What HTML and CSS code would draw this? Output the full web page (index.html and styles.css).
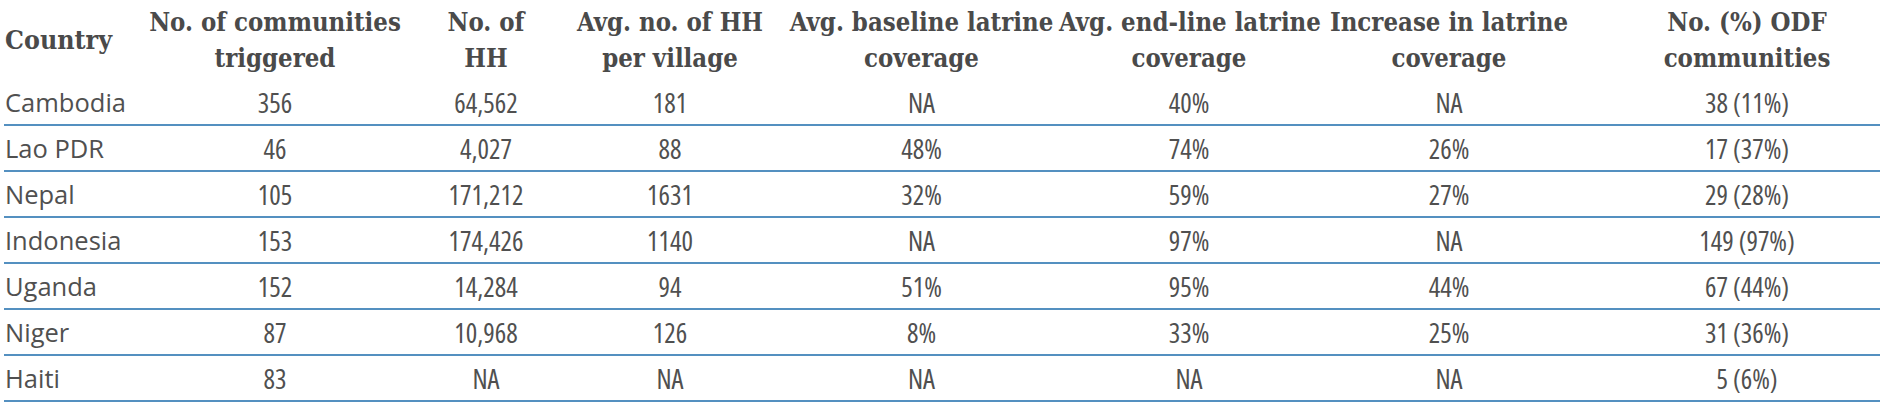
FILE: index.html
```html
<!DOCTYPE html>
<html lang="en">
<head>
<meta charset="utf-8">
<title>CLTS results by country</title>
<link rel="stylesheet" href="styles.css">
</head>
<body>
<table class="results">
  <colgroup>
    <col class="c1"><col class="c2"><col class="c3"><col class="c4"><col class="c5"><col class="c6"><col class="c7"><col class="c8">
  </colgroup>
  <thead>
    <tr>
      <th class="left">Country</th>
      <th>No. of communities<br>triggered</th>
      <th>No. of<br>HH</th>
      <th>Avg. no. of HH<br>per village</th>
      <th>Avg. baseline latrine<br>coverage</th>
      <th>Avg. end-line latrine<br>coverage</th>
      <th>Increase in latrine<br>coverage</th>
      <th>No. (%) ODF<br>communities</th>
    </tr>
  </thead>
  <tbody>
    <tr><td class="left">Cambodia</td><td>356</td><td>64,562</td><td>181</td><td>NA</td><td>40%</td><td>NA</td><td>38 (11%)</td></tr>
    <tr><td class="left">Lao PDR</td><td>46</td><td>4,027</td><td>88</td><td>48%</td><td>74%</td><td>26%</td><td>17 (37%)</td></tr>
    <tr><td class="left">Nepal</td><td>105</td><td>171,212</td><td>1631</td><td>32%</td><td>59%</td><td>27%</td><td>29 (28%)</td></tr>
    <tr><td class="left">Indonesia</td><td>153</td><td>174,426</td><td>1140</td><td>NA</td><td>97%</td><td>NA</td><td>149 (97%)</td></tr>
    <tr><td class="left">Uganda</td><td>152</td><td>14,284</td><td>94</td><td>51%</td><td>95%</td><td>44%</td><td>67 (44%)</td></tr>
    <tr><td class="left">Niger</td><td>87</td><td>10,968</td><td>126</td><td>8%</td><td>33%</td><td>25%</td><td>31 (36%)</td></tr>
    <tr><td class="left">Haiti</td><td>83</td><td>NA</td><td>NA</td><td>NA</td><td>NA</td><td>NA</td><td>5 (6%)</td></tr>
  </tbody>
</table>
</body>
</html>
```
FILE: styles.css
```css
html, body {
  margin: 0;
  padding: 0;
  background: #ffffff;
  overflow: hidden;
}

.results {
  margin-left: 4px;
  width: 1913px;
  table-layout: fixed;
  border-collapse: collapse;
  color: #505050;
}

.c1 { width: 128px; }
.c2 { width: 286px; }
.c3 { width: 136px; }
.c4 { width: 232px; }
.c5 { width: 271px; }
.c6 { width: 264px; }
.c7 { width: 256px; }
.c8 { width: 340px; }

.results th {
  font-family: "DejaVu Serif", "Liberation Serif", serif;
  font-stretch: condensed;
  font-weight: bold;
  font-size: 25.5px;
  line-height: 36px;
  padding: 4px 2px;
  text-align: center;
  vertical-align: middle;
  white-space: nowrap;
  color: #4a4a4a;
}

.results th.left {
  font-size: 26.5px;
}

.results td {
  font-family: "Open Sans", "Noto Sans", sans-serif;
  font-stretch: 82%;
  font-weight: 380;
  font-size: 27px;
  height: 44px;
  padding: 0 2px;
  text-align: center;
  vertical-align: middle;
  border-bottom: 2px solid #5490c0;
  white-space: nowrap;
}

.results td.left {
  font-stretch: 100%;
  font-size: 25.5px;
}

.results .left {
  text-align: left;
  padding-left: 1px;
}
```
